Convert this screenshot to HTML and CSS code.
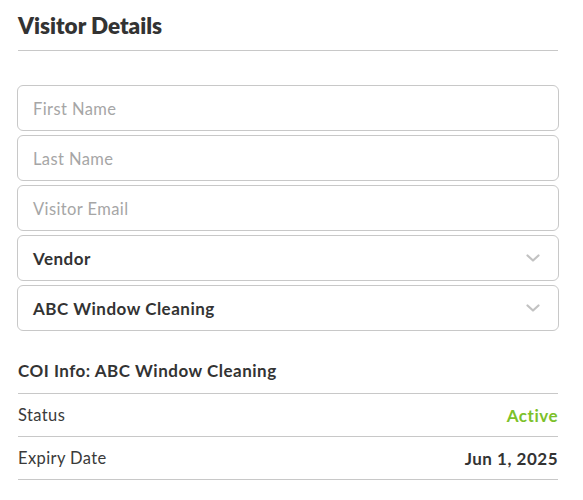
FILE: index.html
```html
<!DOCTYPE html>
<html>
<head>
<meta charset="utf-8">
<link rel="stylesheet" href="styles.css">
</head>
<body>
<div class="panel">
  <h1 class="title">Visitor Details</h1>
  <div class="fields">
    <div class="field placeholder">First Name</div>
    <div class="field placeholder">Last Name</div>
    <div class="field placeholder">Visitor Email</div>
    <div class="field select"><span>Vendor</span>
      <svg class="chev" width="14" height="9" viewBox="0 0 14 9"><path d="M1.5 1.5 L7 6.5 L12.5 1.5" fill="none" stroke="#c2c2c2" stroke-width="2.2" stroke-linecap="round" stroke-linejoin="round"/></svg>
    </div>
    <div class="field select"><span>ABC Window Cleaning</span>
      <svg class="chev" width="14" height="9" viewBox="0 0 14 9"><path d="M1.5 1.5 L7 6.5 L12.5 1.5" fill="none" stroke="#c2c2c2" stroke-width="2.2" stroke-linecap="round" stroke-linejoin="round"/></svg>
    </div>
  </div>
  <div class="coi">
    <div class="coi-title">COI Info: ABC Window Cleaning</div>
    <div class="row"><span class="label">Status</span><span class="value active">Active</span></div>
    <div class="row"><span class="label">Expiry Date</span><span class="value">Jun 1, 2025</span></div>
  </div>
</div>
</body>
</html>
```
FILE: styles.css
```css
* { box-sizing: border-box; }
body {
  margin: 0;
  background: #fff;
  font-family: Lato, "Open Sans", sans-serif;
  color: #333;
}
.panel {
  width: 542px;
  margin-left: 17px;
}
.title {
  margin: 0 1px;
  padding: 12px 0 11px;
  font-size: 22.5px;
  line-height: 27px;
  font-weight: 800;
  color: #333;
  border-bottom: 1px solid #c8c8c8;
}
.fields {
  margin-top: 34px;
  display: flex;
  flex-direction: column;
  gap: 4px;
}
.field {
  height: 46px;
  border: 1px solid #c8c8c8;
  border-radius: 6px;
  padding: 0 15px;
  display: flex;
  align-items: center;
  font-size: 16.5px;
  letter-spacing: 0.4px;
}
.placeholder { color: #a6a6a6; padding-top: 2px; }
.select {
  justify-content: space-between;
  font-weight: 700;
  font-size: 17px;
  letter-spacing: 0.5px;
  color: #333;
  padding-right: 18px;
}
.chev { display: block; }
.coi { margin: 0 1px; margin-top: 29px; }
.coi-title {
  font-size: 17px;
  font-weight: 700;
  letter-spacing: 0.5px;
  line-height: 22px;
  padding-bottom: 11px;
  border-bottom: 1px solid #c8c8c8;
}
.row {
  height: 43px;
  display: flex;
  justify-content: space-between;
  align-items: center;
  border-bottom: 1px solid #c8c8c8;
  font-size: 16.5px;
  letter-spacing: 0.4px;
}
.label { color: #3a3a3a; }
.value { font-weight: 700; font-size: 17px; letter-spacing: 0.5px; color: #333; }
.active { color: #7cc12a; }
```
